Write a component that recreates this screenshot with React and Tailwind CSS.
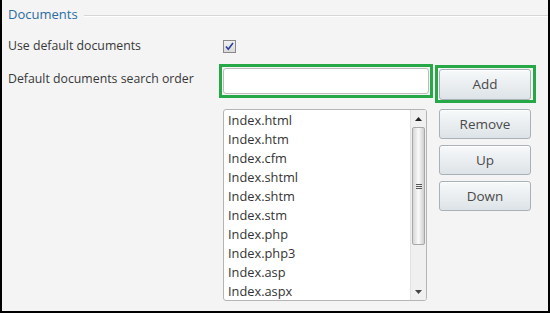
import React from 'react';

const docs = [
    'Index.html',
    'Index.htm',
    'Index.cfm',
    'Index.shtml',
    'Index.shtm',
    'Index.stm',
    'Index.php',
    'Index.php3',
    'Index.asp',
    'Index.aspx',
];

const Btn = ({ children, className = '' }) => (
    <button
        className={`w-[92px] rounded-[3px] border border-[#a9b1b8] bg-gradient-to-b from-[#f7f9fa] to-[#dde3e7] text-[13.5px] text-[#4a4a4a] shadow-[inset_0_1px_0_#fff] ${className}`}
    >
        {children}
    </button>
);

const App = () => {
    return (
        <div
            className="w-[550px] h-[313px] bg-[#f4f4f4] border-x-2 border-b-2 border-black overflow-hidden text-[#383838]"
            style={{ fontFamily: '"Open Sans", "Noto Sans", sans-serif' }}
        >
            {/* legend */}
            <div className="h-[30px] flex items-center pl-[6px]">
                <span className="text-[13px] text-[#2a6ca3]">Documents</span>
                <div className="flex-1 ml-[6px] mt-[1px] flex flex-col">
                    <div className="h-px bg-[#d6d6d6]" />
                    <div className="h-px bg-white" />
                </div>
            </div>

            {/* use default */}
            <div className="h-[32px] flex items-center pl-[6px]">
                <span className="w-[215px] text-[12.3px]">Use default documents</span>
                <svg width="13" height="13" viewBox="0 0 13 13">
                    <defs>
                        <linearGradient id="cb" x1="0" y1="0" x2="0" y2="1">
                            <stop offset="0" stopColor="#f2f2f2" />
                            <stop offset="1" stopColor="#d9d9d9" />
                        </linearGradient>
                    </defs>
                    <rect x="0.5" y="0.5" width="12" height="12" fill="url(#cb)" stroke="#8a8a8a" />
                    <path d="M3 6.5 L5.3 9.2 L10 3" fill="none" stroke="#2a3f9a" strokeWidth="1.6" />
                </svg>
            </div>

            {/* search order */}
            <div className="flex items-start pl-[6px] mt-[2px]">
                <span className="w-[211px] text-[12.3px] mt-[6px]">Default documents search order</span>
                <div className="w-[214px] h-[34px] border-[3px] border-[#25a845] p-px">
                    <input className="w-full h-full rounded-[3px] border border-[#bcbcbc] bg-white outline-none" />
                </div>
                <div className="ml-[2px] mt-px border-[3px] border-[#25a845] p-px pb-0">
                    <Btn className="h-[31px] mr-px">Add</Btn>
                </div>
            </div>

            {/* list + buttons */}
            <div className="flex items-start mt-[6px] pl-[221px]">
                <div className="w-[204px] h-[192px] rounded-[3px] border border-[#b5b5b5] bg-white flex overflow-hidden">
                    <ul className="flex-1 pl-[4px] pt-px text-[12.8px] leading-[19px] text-[#333]">
                        {docs.map(d => (
                            <li key={d}>{d}</li>
                        ))}
                    </ul>
                    <div className="w-[16px] flex flex-col bg-[#f0f0f0] border-l border-[#e2e2e2]">
                        <div className="h-[17px] flex items-center justify-center">
                            <svg width="7" height="4" viewBox="0 0 7 4"><path d="M0 4 L3.5 0 L7 4 Z" fill="#222" /></svg>
                        </div>
                        <div className="h-[118px] mx-px rounded-[2px] border border-[#a8a8a8] bg-gradient-to-r from-[#d6d6d6] via-[#fafafa] to-[#cfcfcf] flex items-center justify-center">
                            <div className="flex flex-col gap-px">
                                <div className="w-[6px] h-px bg-[#555]" />
                                <div className="w-[6px] h-px bg-[#555]" />
                                <div className="w-[6px] h-px bg-[#555]" />
                            </div>
                        </div>
                        <div className="flex-1" />
                        <div className="h-[17px] flex items-center justify-center">
                            <svg width="7" height="4" viewBox="0 0 7 4"><path d="M0 0 L3.5 4 L7 0 Z" fill="#444" /></svg>
                        </div>
                    </div>
                </div>
                <div className="ml-[12px] flex flex-col gap-[6px]">
                    <Btn className="h-[30px]">Remove</Btn>
                    <Btn className="h-[30px]">Up</Btn>
                    <Btn className="h-[30px]">Down</Btn>
                </div>
            </div>
        </div>
    );
};

export default App;
